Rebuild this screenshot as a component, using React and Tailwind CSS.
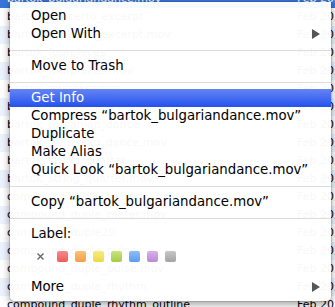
const files = [
  'bartok_bulgariandance.mov',
  'bartok_concerto_excerpt',
  'bartok_concerto_excerpt.mov',
  'bartok_fourpieces',
  'bartok_fourpieces.mov',
  'bartok_mikrokosmos',
  'bartok_mikrokosmos.mov',
  'bartok_romanian_dance',
  'bartok_romanian_dance.mov',
  'bartok_string_quartet',
  'bartok_string_quartet.mov',
  'compound_duple_meter',
  'compound_duple_meter.mov',
  'compound_duple20',
  'compound_duple_pulse',
  'compound_duple_pulse.mov',
  'compound_duple_rhythm',
  'compound_duple_rhythm_outline',
];

const swatches = [
  'from-[#f88a8a] to-[#ee5a5a]',
  'from-[#f9c27a] to-[#f39d45]',
  'from-[#f6ec7e] to-[#ecd944]',
  'from-[#c8e47a] to-[#a5cd45]',
  'from-[#8cbcf8] to-[#5b9cf0]',
  'from-[#d7b2e8] to-[#bd88d6]',
  'from-[#c6c6c6] to-[#a4a4a4]',
];

function Arrow() {
  return (
    <svg width="8" height="10" viewBox="0 0 8 10" className="mr-[11px]">
      <path d="M0 0 L8 5 L0 10 Z" fill="#555" />
    </svg>
  );
}

function Item({ children, active, arrow }) {
  return (
    <div
      className={
        'flex h-[18px] items-center justify-between pl-[21px] leading-[18px] ' +
        (active ? 'bg-gradient-to-b from-[#6583f4] to-[#2450ec] text-white' : 'text-black')
      }
    >
      <span>{children}</span>
      {arrow && <Arrow />}
    </div>
  );
}

function Sep() {
  return (
    <div className="pt-[7px] pb-[6px]">
      <div className="h-px bg-[#dcdcdc]" />
    </div>
  );
}

export default function App() {
  return (
    <div className="relative h-[307px] w-[335px] overflow-hidden bg-white">
      <div className="-mt-[10px] text-[11px] font-['DejaVu_Sans',sans-serif]">
        {files.map((name, i) => (
          <div
            key={name}
            className={
              'flex h-[18px] items-center justify-between pl-[7px] ' +
              (i === 0 ? 'bg-[#3875d7] text-white' : i % 2 === 0 ? 'bg-[#edf3fe] text-black' : 'bg-white text-black')
            }
          >
            <span>{name}</span>
            <span className="w-[38px] whitespace-nowrap">Feb 20, 2010</span>
          </div>
        ))}
      </div>

      <div className="absolute left-[10px] top-[2px] w-[321px] rounded-b-[5px] bg-white/[0.97] pt-[5px] pb-[5px] text-[13.3px] font-['DejaVu_Sans',sans-serif] shadow-[0_3px_9px_rgba(0,0,0,0.4)] ring-1 ring-black/10">
        <Item>Open</Item>
        <Item arrow>Open With</Item>
        <Sep />
        <Item>Move to Trash</Item>
        <Sep />
        <Item active>Get Info</Item>
        <Item>Compress “bartok_bulgariandance.mov”</Item>
        <Item>Duplicate</Item>
        <Item>Make Alias</Item>
        <Item>Quick Look “bartok_bulgariandance.mov”</Item>
        <Sep />
        <Item>Copy “bartok_bulgariandance.mov”</Item>
        <Sep />
        <Item>Label:</Item>
        <div className="flex items-center pt-[8px] pb-[16px] pl-[27px]">
          <svg width="7" height="7" viewBox="0 0 7 7" className="mr-[13px]">
            <path d="M0.5 0.5 L6.5 6.5 M6.5 0.5 L0.5 6.5" stroke="#666" strokeWidth="1.4" />
          </svg>
          <div className="flex gap-[7px]">
            {swatches.map((c) => (
              <div key={c} className={'h-[11px] w-[11px] rounded-[2px] bg-gradient-to-b ' + c} />
            ))}
          </div>
        </div>
        <Item arrow>More</Item>
      </div>
    </div>
  );
}
